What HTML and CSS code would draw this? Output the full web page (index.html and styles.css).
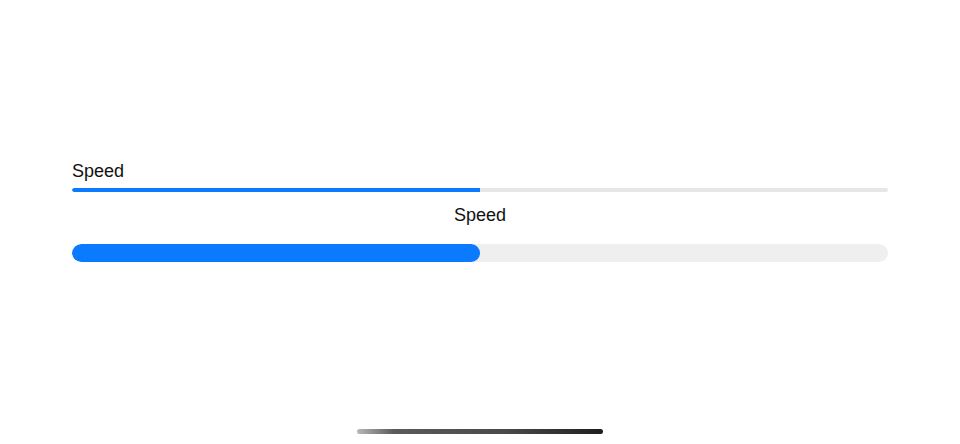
FILE: index.html
```html
<!DOCTYPE html>
<html>
<head>
<meta charset="utf-8">
<link rel="stylesheet" href="styles.css">
</head>
<body>
<div class="screen">
  <div class="content">
    <div class="label">Speed</div>
    <div class="track thin"><div class="fill" style="width:50%"></div></div>
    <div class="label center">Speed</div>
    <div class="track thick"><div class="fill" style="width:50%"></div></div>
  </div>
  <div class="home-indicator"></div>
</div>
</body>
</html>
```
FILE: styles.css
```css
html, body {
  margin: 0;
  padding: 0;
  background: #ffffff;
}
.screen {
  position: relative;
  width: 960px;
  height: 444px;
  overflow: hidden;
  font-family: "Liberation Sans", Arial, sans-serif;
  color: #111111;
}
.content {
  padding: 160px 72px 0 72px;
  display: flex;
  flex-direction: column;
}
.label {
  font-size: 18px;
  line-height: 22px;
}
.label.center {
  text-align: center;
  margin-top: 12px;
}
.track {
  width: 100%;
  overflow: hidden;
}
.track.thin {
  height: 4px;
  margin-top: 6px;
  background: #e6e6e6;
  border-radius: 2px;
}
.track.thick {
  height: 18px;
  margin-top: 18px;
  background: #efefef;
  border-radius: 9px;
}
.fill {
  height: 100%;
  background: #0a7aff;
}
.track.thin .fill {
  border-radius: 2px 0 0 2px;
}
.track.thick .fill {
  border-radius: 9px;
}
.home-indicator {
  position: absolute;
  left: 357px;
  top: 429px;
  width: 246px;
  height: 5px;
  border-radius: 3px;
  background: linear-gradient(to right, #b8b8b8 0%, #5a5a5a 15%, #4a4a4a 60%, #1e1e1e 100%);
}
```
